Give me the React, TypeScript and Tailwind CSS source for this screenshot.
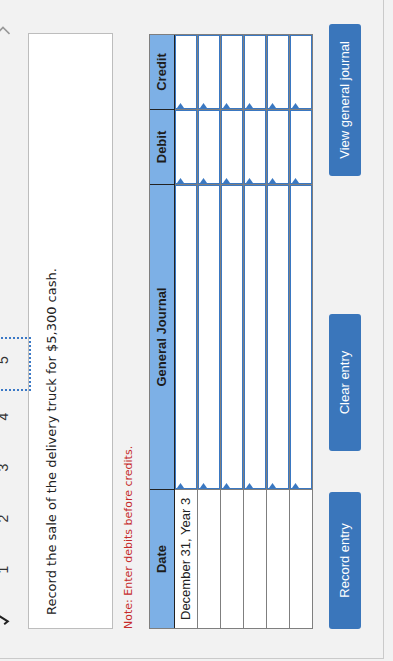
import React from "react";

const GRID = "border-[#7f7f7f]";

const Corner = () => (
  <svg className="absolute left-0 top-[1px]" width="5" height="7" viewBox="0 0 5 7">
    <polygon points="0,0 5,3.5 0,7" fill="#3a78c2" />
  </svg>
);

const InputCell = ({ wrap }: { wrap: string }) => (
  <div className={wrap}>
    <div className="relative h-[22px] w-full border border-[#3a78c2] bg-white">
      <Corner />
    </div>
  </div>
);

const rows = ["December 31, Year 3", "", "", "", "", ""];

export default function App() {
  return (
    <div className="relative h-[661px] w-[393px] overflow-hidden bg-[#f2f2f2] font-['Liberation_Sans',Arial,sans-serif]">
      {/* the whole page is shown turned a quarter anticlockwise */}
      <div className="h-[393px] w-[661px] origin-top-left [transform:translateY(661px)_rotate(-90deg)]">
        <div className="ml-[2px] flow-root h-[384px] border-b border-l border-[#cacaca]">
          {/* question tabs */}
          <div className="relative z-10 -mt-[4px] flex h-[32px] items-start pl-[12px] text-[14px] leading-[14px] text-[#333]">
            <div className="flex w-[51px] justify-center">
              <svg width="10" height="14" viewBox="0 0 10 14">
                <path d="M0.8 8.2 L3.6 11.8 L9.4 2.5" fill="none" stroke="#222" strokeWidth="2" />
              </svg>
            </div>
            {["1", "2", "3", "4"].map((n) => (
              <div key={n} className="flex w-[51px] justify-center">
                {n}
              </div>
            ))}
            <div className="flex h-[35px] w-[54px] shrink-0 justify-center border-x-2 border-b-2 border-dotted border-[#3a78c6] pl-[8px]">
              5
            </div>
            <svg className="ml-[302px]" width="9" height="14" viewBox="0 0 9 14">
              <path d="M1 0.5 L7.5 7 L1 13.5" fill="none" stroke="#9a9a9a" strokeWidth="1.6" />
            </svg>
          </div>

          <div className="ml-[29px] h-[85px] w-[596px] border border-[#bdbdbd] bg-white pl-[13px] pt-[14px] font-['DejaVu_Sans',sans-serif] text-[13px] leading-[18px] text-[#222]">
            Record the sale of the delivery truck for $5,300 cash.
          </div>

          <p className="ml-[29px] mt-[9px] font-['DejaVu_Sans',sans-serif] text-[11px] leading-[13px] text-[#c62a2a]">
            Note: Enter debits before credits.
          </p>

          {/* journal grid */}
          <div className={`ml-[29px] mt-[14px] w-[595px] border ${GRID} text-[13px] text-[#222]`}>
            <div className="flex h-[25px] border-b border-[#222] bg-[#7db0e6] font-bold leading-[24px] text-[#1d1d1d]">
              <div className="w-[139px] border-r border-[#222] text-center">Date</div>
              <div className="w-[305px] border-r border-[#222] text-center">General Journal</div>
              <div className="w-[75px] border-r border-[#222] text-center">Debit</div>
              <div className="w-[74px] text-center">Credit</div>
            </div>
            <div className="divide-y divide-[#7f7f7f]">
              {rows.map((d, i) => (
                <div key={i} className="flex bg-white">
                  <div className={`h-[22px] w-[139px] border-r ${GRID} pl-[8px] leading-[22px]`}>{d}</div>
                  <InputCell wrap={`w-[305px] border-r ${GRID}`} />
                  <InputCell wrap={`w-[75px] border-r ${GRID}`} />
                  <InputCell wrap="w-[74px]" />
                </div>
              ))}
            </div>
          </div>

          <div className="ml-[29px] mt-[16px] flex text-[13px] text-white">
            <button className="h-[32px] w-[137px] rounded-[3px] bg-[#3a76bb]">Record entry</button>
            <button className="ml-[41px] h-[32px] w-[137px] rounded-[3px] bg-[#3a76bb]">Clear entry</button>
            <button className="ml-[138px] h-[32px] w-[152px] rounded-[3px] bg-[#3a76bb]">View general journal</button>
          </div>
        </div>
      </div>
    </div>
  );
}
